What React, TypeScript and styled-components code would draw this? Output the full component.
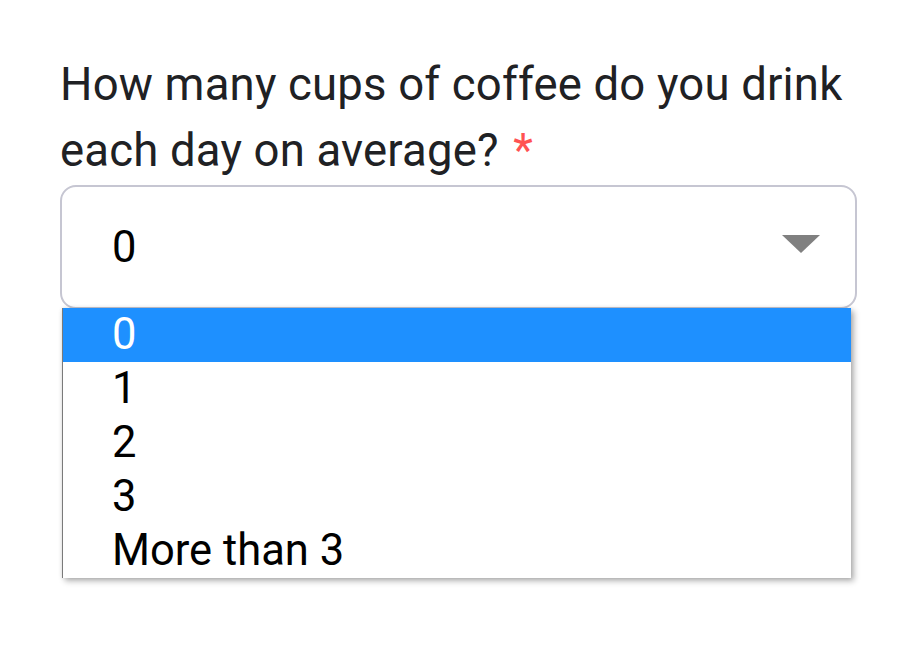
import styled, { createGlobalStyle } from 'styled-components';

const GlobalStyle = createGlobalStyle`
  html, body {
    margin: 0;
    padding: 0;
    background: #ffffff;
  }
  body {
    font-family: Roboto, "Noto Sans", Arial, sans-serif;
  }
`;

const Page = styled.div`
  width: 917px;
  height: 648px;
  box-sizing: border-box;
  padding: 52px 60px 0;
  background: #ffffff;
`;

const Label = styled.label`
  display: block;
  font-size: 45.5px;
  line-height: 66px;
  letter-spacing: 0.18px;
  color: #202124;
`;

const Required = styled.span`
  color: #ff5252;
  margin-left: 3px;
`;

const SelectWrap = styled.div`
  position: relative;
  margin-top: 1px;
`;

const SelectBox = styled.div`
  height: 124px;
  box-sizing: border-box;
  border: 2px solid #c6c6d2;
  border-radius: 16px;
  display: flex;
  align-items: center;
  justify-content: space-between;
  padding: 0 35px 0 50px;
  font-size: 43.5px;
  color: #000000;
`;

const Arrow = styled.span`
  width: 0;
  height: 0;
  border-left: 19px solid transparent;
  border-right: 19px solid transparent;
  border-top: 18px solid #808080;
  margin-top: -6px;
`;

const OptionList = styled.ul`
  position: absolute;
  top: 123px;
  left: 2px;
  right: 6px;
  margin: 0;
  padding: 0;
  list-style: none;
  background: #ffffff;
  border-left: 1px solid #7a7a7a;
  box-shadow: 3px 3px 6px rgba(0, 0, 0, 0.3), 0 0 4px rgba(0, 0, 0, 0.1);
`;

const Option = styled.li<{ $active?: boolean }>`
  height: 54px;
  line-height: 54px;
  padding-left: 49px;
  font-size: 43.5px;
  color: ${p => (p.$active ? '#ffffff' : '#000000')};
  background: ${p => (p.$active ? '#1e90ff' : 'transparent')};
`;

const options = ['0', '1', '2', '3', 'More than 3'];

export default function App() {
  return (
    <Page>
      <GlobalStyle />
      <Label>
        How many cups of coffee do you drink each day on average?{' '}
        <Required>*</Required>
      </Label>
      <SelectWrap>
        <SelectBox>
          <span>0</span>
          <Arrow />
        </SelectBox>
        <OptionList>
          {options.map((o, i) => (
            <Option key={o} $active={i === 0}>
              {o}
            </Option>
          ))}
        </OptionList>
      </SelectWrap>
    </Page>
  );
}
